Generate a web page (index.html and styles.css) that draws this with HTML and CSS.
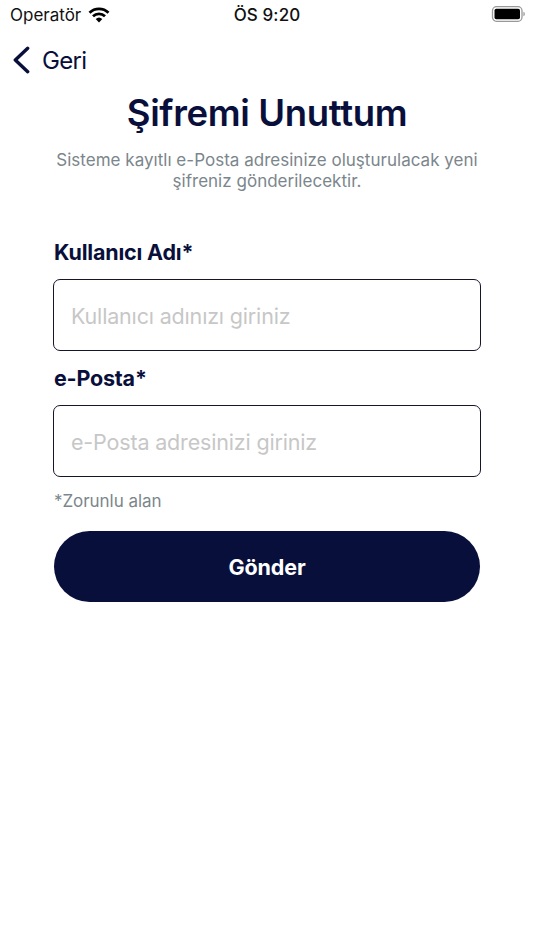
FILE: index.html
```html
<!DOCTYPE html>
<html lang="tr">
<head>
    <meta charset="UTF-8">
    <meta name="viewport" content="width=device-width, initial-scale=1.0">
    <title>Şifremi Unuttum</title>
    <link rel="stylesheet" href="styles.css">
</head>
<body>
<div class="status-bar">
    <div class="carrier">
        <span>Operatör</span>
        <svg class="wifi" viewBox="0 0 22 16">
            <path d="M1.5 5.7 A13.6 13.6 0 0 1 20.5 5.7" />
            <path d="M5 9.2 A8.7 8.7 0 0 1 17 9.2" />
            <path class="dot" d="M11 15.4 L7.7 12.1 A4.8 4.8 0 0 1 14.3 12.1 Z" />
        </svg>
    </div>
    <div class="time">ÖS 9:20</div>
    <svg class="battery" viewBox="0 0 34 16">
        <rect class="shell" x="1.5" y="0.7" width="29.5" height="14.6" rx="4" />
        <rect class="level" x="3.5" y="2.7" width="25.5" height="10.6" rx="1.8" />
        <path class="cap" d="M32.3 5.7 Q34 6.3 34 8 Q34 9.7 32.3 10.3 Z" />
    </svg>
</div>
<a class="back" href="#">
    <svg class="chevron" viewBox="0 0 18 28">
        <path d="M14.7 2.3 L2.3 14 L14.7 25.7" />
    </svg>
    <span>Geri</span>
</a>
<div class="content">
    <h1>Şifremi Unuttum</h1>
    <p class="info">Sisteme kayıtlı e-Posta adresinize oluşturulacak yeni<br>şifreniz gönderilecektir.</p>
    <form class="form">
        <label for="username">Kullanıcı Adı*</label>
        <input type="text" id="username" placeholder="Kullanıcı adınızı giriniz">
        <label for="email">e-Posta*</label>
        <input type="text" id="email" placeholder="e-Posta adresinizi giriniz">
        <p class="required">*Zorunlu alan</p>
        <button type="button">Gönder</button>
    </form>
</div>
</body>
</html>
```
FILE: styles.css
```css
* {
    box-sizing: border-box;
}
body {
    margin: 0;
    font-family: 'Inter', sans-serif;
    background-color: #fff;
    color: #090f3b;
}
.status-bar {
    display: grid;
    grid-template-columns: 1fr auto 1fr;
    align-items: center;
    height: 30px;
    padding: 0 9px 0 10px;
    font-size: 17px;
    color: #111;
}
.carrier {
    display: flex;
    align-items: center;
    gap: 7px;
}
.wifi {
    width: 22px;
    height: 16px;
    fill: none;
    stroke: #000;
    stroke-width: 2.8;
}
.wifi .dot {
    fill: #000;
    stroke: none;
}
.time {
    padding-right: 1px;
    font-weight: 500;
    letter-spacing: 0.1px;
}
.battery {
    width: 34px;
    height: 16px;
    margin-bottom: 2px;
    justify-self: end;
}
.battery .shell {
    fill: none;
    stroke: #999;
    stroke-width: 1.3;
}
.battery .level {
    fill: #000;
}
.battery .cap {
    fill: #a5a5a5;
}
.back {
    display: flex;
    align-items: center;
    gap: 11px;
    height: 60px;
    padding-left: 13px;
    font-size: 24px;
    letter-spacing: -0.7px;
    color: #090f3b;
    text-decoration: none;
}
.chevron {
    width: 18px;
    height: 28px;
    fill: none;
    stroke: #090f3b;
    stroke-width: 3.4;
    stroke-linecap: round;
    stroke-linejoin: round;
}
.content {
    padding: 0 53px;
}
h1 {
    margin: 0;
    font-size: 36.5px;
    font-weight: 600;
    line-height: 46px;
    letter-spacing: -0.35px;
    text-align: center;
}
.info {
    margin: 14px 0 0;
    font-size: 17px;
    line-height: 21px;
    letter-spacing: 0.02px;
    text-align: center;
    white-space: nowrap;
    color: #7b868c;
}
.form {
    display: flex;
    flex-direction: column;
    margin-top: 46px;
}
label {
    margin: 0 1px 13px;
    font-size: 21.5px;
    font-weight: 700;
    line-height: 28px;
    letter-spacing: -0.2px;
}
input {
    width: 100%;
    height: 72px;
    margin-bottom: 13px;
    padding: 2px 17px 0;
    border: 1.5px solid #15152b;
    border-radius: 7px;
    font-family: inherit;
    font-size: 21.5px;
    letter-spacing: -0.17px;
}
input::placeholder {
    color: #c7c7c7;
}
.required {
    margin: 1px 1px 19px;
    font-size: 17px;
    line-height: 21px;
    letter-spacing: -0.05px;
    color: #7b868c;
}
button {
    height: 71px;
    margin: 0 1px;
    border: none;
    border-radius: 36px;
    background-color: #090f3b;
    color: #fff;
    font-family: inherit;
    font-size: 21.5px;
    font-weight: 700;
    letter-spacing: -0.1px;
}
```
